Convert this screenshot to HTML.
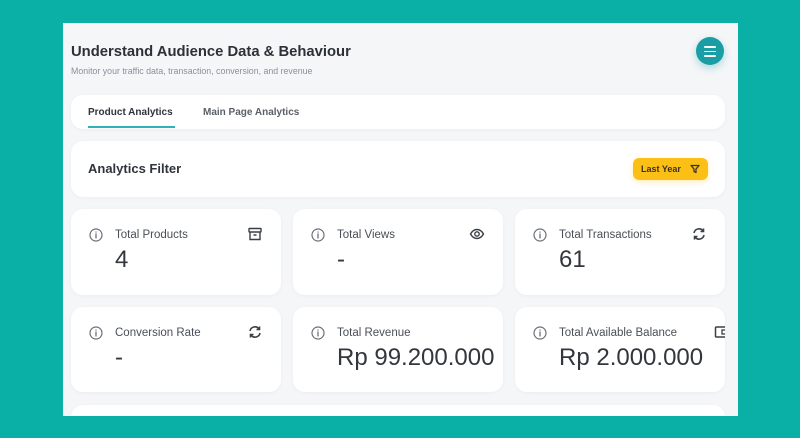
<!DOCTYPE html>
<html><head><style>
*{margin:0;padding:0;box-sizing:border-box}
body{width:800px;height:438px;background:#0aafa5;font-family:"Liberation Sans",sans-serif;position:relative;overflow:hidden}
.panel{position:absolute;left:63px;top:23px;width:675px;height:393px;background:#f5f6f8;overflow:hidden}
.abs{position:absolute}
.card{position:absolute;background:#fff;border-radius:12px;box-shadow:0 1px 4px rgba(0,0,0,0.04)}
h1{position:absolute;left:8px;top:21px;font-size:14.8px;font-weight:bold;color:#2c3038}
.sub{position:absolute;left:8px;top:43px;font-size:8.8px;color:#8a9099}
.menu{position:absolute;left:633px;top:14px;width:28px;height:28px;border-radius:50%;background:#1a9ea5;box-shadow:0 3px 8px rgba(26,158,165,0.35)}
.menu i{position:absolute;left:8px;width:12px;height:1.6px;background:#fff;border-radius:1px}
.tab{position:absolute;top:12px;font-size:10px;font-weight:bold}
.stat .lbl{position:absolute;left:44px;top:20px;font-size:11.5px;color:#4a4f57}
.stat .val{position:absolute;left:44px;top:37px;font-size:24px;color:#33373d}
.stat svg.info{position:absolute;left:18px;top:19px}
.stat .ic{position:absolute;top:17px}
</style></head><body>
<div class="panel">
<h1>Understand Audience Data &amp; Behaviour</h1>
<div class="sub">Monitor your traffic data, transaction, conversion, and revenue</div>
<div class="menu"><i style="top:9px"></i><i style="top:13.5px"></i><i style="top:18px"></i></div>

<div class="card" style="left:8px;top:72px;width:654px;height:34px">
 <div class="tab" style="left:17px;color:#2f343b">Product Analytics</div>
 <div class="abs" style="left:17px;top:31px;width:87px;height:2px;background:#2fb1b5"></div>
 <div class="tab" style="left:132px;color:#5b6068">Main Page Analytics</div>
</div>

<div class="card" style="left:8px;top:118px;width:654px;height:56px">
 <div class="abs" style="left:17px;top:20px;font-size:13px;font-weight:bold;color:#2f343b">Analytics Filter</div>
 <div class="abs" style="left:562px;top:17px;width:75px;height:22px;background:#fbbf15;border-radius:6px;box-shadow:0 2px 6px rgba(251,191,21,0.3)">
  <span class="abs" style="left:8px;top:6px;font-size:9px;font-weight:bold;color:#3a3222">Last Year</span>
  <svg class="abs" style="left:57px;top:6px" width="10" height="10" viewBox="0 0 10 10"><path d="M1 1.5h8L6 5v3.5L4 7.5V5z" fill="none" stroke="#3a3222" stroke-width="1.3" stroke-linejoin="round"/></svg>
 </div>
</div>

<div class="card stat" style="left:8px;top:186px;width:210px;height:86px">
 <svg class="info" width="14" height="14" viewBox="0 0 14 14"><circle cx="7" cy="7" r="6" fill="none" stroke="#6b7078" stroke-width="1.2"/><path d="M7 6v4M7 4v.1" stroke="#6b7078" stroke-width="1.3" stroke-linecap="round"/></svg>
 <div class="lbl">Total Products</div><div class="val">4</div>
 <svg class="ic" style="left:176px" width="16" height="16" viewBox="0 0 16 16"><rect x="2" y="2.5" width="12" height="3.5" rx=".5" fill="none" stroke="#3a3f46" stroke-width="1.4"/><path d="M3 6v7.5h10V6M6.5 9h3" fill="none" stroke="#3a3f46" stroke-width="1.4"/></svg>
</div>
<div class="card stat" style="left:230px;top:186px;width:210px;height:86px">
 <svg class="info" width="14" height="14" viewBox="0 0 14 14"><circle cx="7" cy="7" r="6" fill="none" stroke="#6b7078" stroke-width="1.2"/><path d="M7 6v4M7 4v.1" stroke="#6b7078" stroke-width="1.3" stroke-linecap="round"/></svg>
 <div class="lbl">Total Views</div><div class="val">-</div>
 <svg class="ic" style="left:176px" width="16" height="16" viewBox="0 0 16 16"><path d="M1.5 8C3.5 4.5 5.5 3.5 8 3.5S12.5 4.5 14.5 8C12.5 11.5 10.5 12.5 8 12.5S3.5 11.5 1.5 8z" fill="none" stroke="#3a3f46" stroke-width="1.4"/><circle cx="8" cy="8" r="2.2" fill="none" stroke="#3a3f46" stroke-width="1.4"/></svg>
</div>
<div class="card stat" style="left:452px;top:186px;width:210px;height:86px">
 <svg class="info" width="14" height="14" viewBox="0 0 14 14"><circle cx="7" cy="7" r="6" fill="none" stroke="#6b7078" stroke-width="1.2"/><path d="M7 6v4M7 4v.1" stroke="#6b7078" stroke-width="1.3" stroke-linecap="round"/></svg>
 <div class="lbl">Total Transactions</div><div class="val">61</div>
 <svg class="ic" style="left:176px" width="16" height="16" viewBox="0 0 16 16"><path d="M3 7a5 5 0 0 1 9-2M13 9a5 5 0 0 1-9 2" fill="none" stroke="#3a3f46" stroke-width="1.6"/><path d="M12.5 2.5v3h-3M3.5 13.5v-3h3" fill="none" stroke="#3a3f46" stroke-width="1.6"/></svg>
</div>
<div class="card stat" style="left:8px;top:284px;width:210px;height:85px">
 <svg class="info" width="14" height="14" viewBox="0 0 14 14"><circle cx="7" cy="7" r="6" fill="none" stroke="#6b7078" stroke-width="1.2"/><path d="M7 6v4M7 4v.1" stroke="#6b7078" stroke-width="1.3" stroke-linecap="round"/></svg>
 <div class="lbl">Conversion Rate</div><div class="val">-</div>
 <svg class="ic" style="left:176px" width="16" height="16" viewBox="0 0 16 16"><path d="M3 7a5 5 0 0 1 9-2M13 9a5 5 0 0 1-9 2" fill="none" stroke="#3a3f46" stroke-width="1.6"/><path d="M12.5 2.5v3h-3M3.5 13.5v-3h3" fill="none" stroke="#3a3f46" stroke-width="1.6"/></svg>
</div>
<div class="card stat" style="left:230px;top:284px;width:210px;height:85px">
 <svg class="info" width="14" height="14" viewBox="0 0 14 14"><circle cx="7" cy="7" r="6" fill="none" stroke="#6b7078" stroke-width="1.2"/><path d="M7 6v4M7 4v.1" stroke="#6b7078" stroke-width="1.3" stroke-linecap="round"/></svg>
 <div class="lbl">Total Revenue</div><div class="val">Rp 99.200.000</div>
</div>
<div class="card stat" style="left:452px;top:284px;width:210px;height:85px;overflow:hidden">
 <svg class="info" width="14" height="14" viewBox="0 0 14 14"><circle cx="7" cy="7" r="6" fill="none" stroke="#6b7078" stroke-width="1.2"/><path d="M7 6v4M7 4v.1" stroke="#6b7078" stroke-width="1.3" stroke-linecap="round"/></svg>
 <div class="lbl">Total Available Balance</div><div class="val">Rp 2.000.000</div>
 <svg class="ic" style="left:199px" width="16" height="16" viewBox="0 0 16 16"><rect x="1.5" y="3" width="13" height="10" rx="1" fill="none" stroke="#3a3f46" stroke-width="1.5"/><rect x="8" y="6" width="6" height="4" fill="none" stroke="#3a3f46" stroke-width="1.3"/></svg>
</div>
<div class="card" style="left:8px;top:382px;width:654px;height:40px"></div>
</div>
</body></html>
